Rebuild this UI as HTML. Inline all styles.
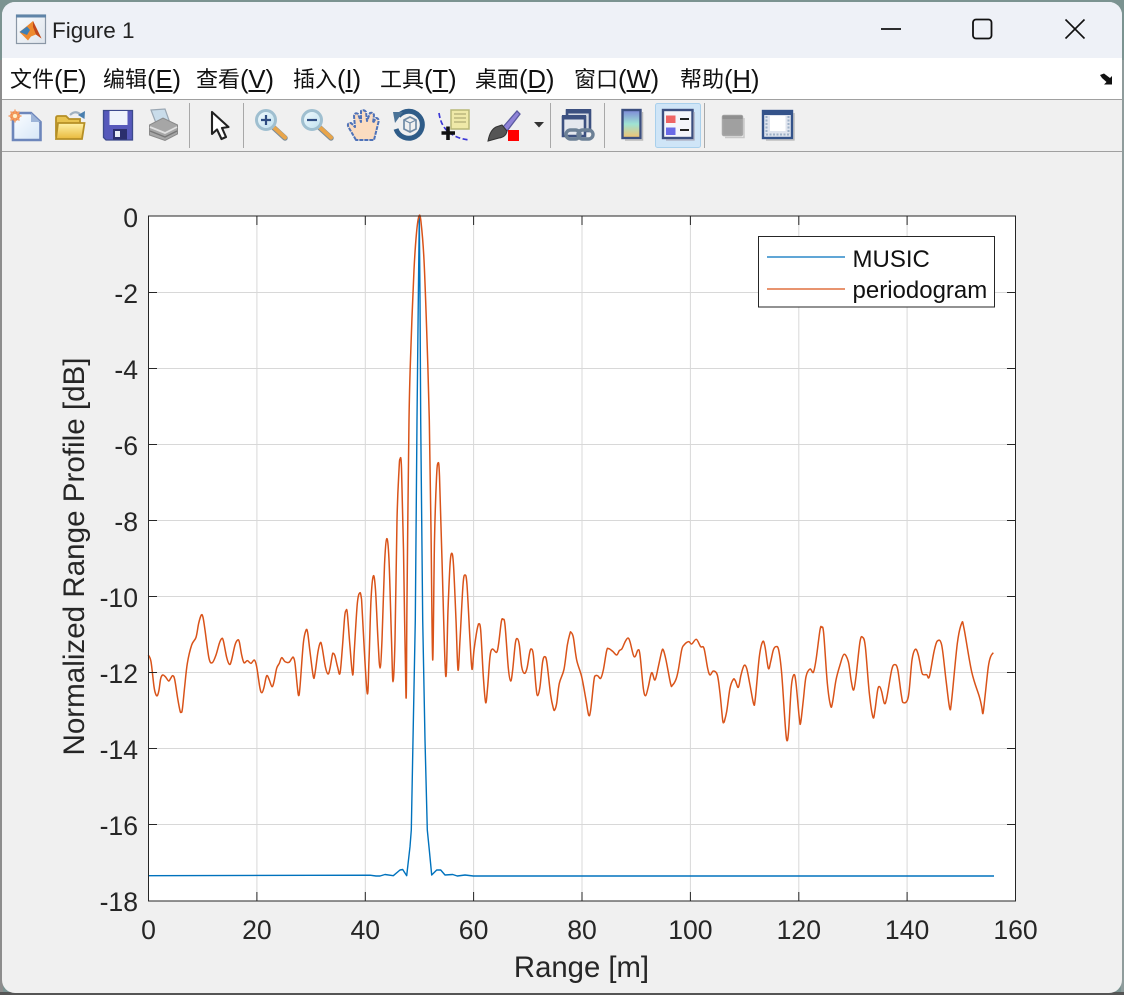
<!DOCTYPE html>
<html><head><meta charset="utf-8">
<style>
html,body{margin:0;padding:0;width:1124px;height:995px;overflow:hidden;background:#7b9391}
#edgeL{position:absolute;left:0;top:60px;width:3px;height:935px;background:#8d8d8d}
#edgeB{position:absolute;left:0;top:992px;width:1124px;height:3px;background:#555}
#edgeR{position:absolute;left:1121px;top:60px;width:3px;height:935px;background:#8f9c9c}
#win{position:absolute;left:2px;top:2px;width:1120px;height:991px;border-radius:13px;overflow:hidden;background:#f0f0f0}
#tb{position:absolute;left:0;top:0;width:1120px;height:56px;background:#eef1f7}
#mb{position:absolute;left:0;top:56px;width:1120px;height:41px;background:#fff;border-bottom:1px solid #a0a0a0}
#tl{position:absolute;left:0;top:98px;width:1120px;height:51px;background:#f0f0f0;border-bottom:1px solid #a0a0a0}
.m{position:absolute;top:61px;font:22px/34px "Liberation Sans","Noto Sans CJK SC",sans-serif;color:#111;white-space:nowrap;filter:blur(.3px)}
.m span{font-size:25.5px;font-weight:400;vertical-align:-1px}
.m u{text-underline-offset:2px}
#title{position:absolute;left:50px;top:15px;font:22.5px/28px "Liberation Sans",sans-serif;color:#222;filter:blur(.3px)}
svg{position:absolute;left:0;top:0;filter:blur(.35px)}
</style></head><body>
<div id="edgeL"></div><div id="edgeR"></div><div id="edgeB"></div>
<div id="win">
<div id="tb"></div><div id="mb"></div><div id="tl"></div>
<div id="title">Figure 1</div>
<div class="m" style="left:8px">文件<span>(<u>F</u>)</span></div>
<div class="m" style="left:101px">编辑<span>(<u>E</u>)</span></div>
<div class="m" style="left:194px">查看<span>(<u>V</u>)</span></div>
<div class="m" style="left:291px">插入<span>(<u>I</u>)</span></div>
<div class="m" style="left:378px">工具<span>(<u>T</u>)</span></div>
<div class="m" style="left:473px">桌面<span>(<u>D</u>)</span></div>
<div class="m" style="left:572px">窗口<span>(<u>W</u>)</span></div>
<div class="m" style="left:678px">帮助<span>(<u>H</u>)</span></div>
</div>
<svg width="1124" height="995" viewBox="0 0 1124 995" xmlns="http://www.w3.org/2000/svg" font-family="'Liberation Sans',sans-serif">
<defs>
<linearGradient id="pg" x1="0" y1="0" x2="1" y2="1"><stop offset="0" stop-color="#fbfdff"/><stop offset="1" stop-color="#d6e6f7"/></linearGradient>
<linearGradient id="fo" x1="0" y1="0" x2="0" y2="1"><stop offset="0" stop-color="#fff2a8"/><stop offset="1" stop-color="#e9b93c"/></linearGradient>
<linearGradient id="cb" x1="0" y1="0" x2="0" y2="1"><stop offset="0" stop-color="#7d88d8"/><stop offset=".5" stop-color="#9fe3d4"/><stop offset="1" stop-color="#f4c26e"/></linearGradient>
<linearGradient id="mw" x1="0" y1="0" x2="1" y2="1"><stop offset="0" stop-color="#f7fafd"/><stop offset="1" stop-color="#dfe5ec"/></linearGradient>
<linearGradient id="gl" x1="0" y1="0" x2="1" y2="1"><stop offset="0" stop-color="#f2fbff"/><stop offset="1" stop-color="#bfe0ee"/></linearGradient>
</defs>

<!-- window controls -->
<path d="M881 29H901" stroke="#111" stroke-width="1.800"/>
<rect x="973" y="19.500" width="18.500" height="19" rx="3" fill="none" stroke="#111" stroke-width="1.800"/>
<path d="M1065.500 19.500L1084.500 38.500M1084.500 19.500L1065.500 38.500" stroke="#111" stroke-width="1.600"/>

<!-- matlab logo -->
<rect x="16.500" y="15" width="29" height="28.500" fill="url(#mw)" stroke="#8a97a6" stroke-width="1.200"/>
<rect x="16" y="14.500" width="30" height="3" fill="#5f84a8"/>
<path d="M19.500 32L27 26L33 21L41.500 38.500L36 34.500L31 36.500L28 40.500Z" fill="#ee8a2e"/>
<path d="M19.500 32L27 26.500L30 30L27 35Z" fill="#3f7fb5"/>
<path d="M33 21L41.500 38.500L36 34.500L33 27Z" fill="#c0471c"/>

<!-- chevron in menu bar -->
<path d="M1100 75L1104 73.500L1110 78L1112 76V84.500H1104L1106.500 82L1102 78Z" fill="#111"/>

<!-- separators -->
<path d="M189.500 103V148M243.500 103V148M550.500 103V148M604.500 103V148M704.500 103V148" stroke="#a8a8a8" stroke-width="1"/>

<!-- new -->
<path d="M13 113H31L40.500 122V140H13Z" fill="url(#pg)" stroke="#6d86bb" stroke-width="2.600"/>
<path d="M31 113V122H40.500Z" fill="#9db4d8"/>
<circle cx="15" cy="116" r="5" fill="#f18a45"/>
<path d="M15 109.500V122.500M8.500 116H21.500M10.500 111.500L19.500 120.500M19.500 111.500L10.500 120.500" stroke="#f3a06a" stroke-width="1.500"/>
<circle cx="15" cy="116" r="2" fill="#fff2c9"/>
<!-- open -->
<path d="M56 118Q56 116 58 116H66L69 119H80V138H58Q56 138 56 136Z" fill="#e8c34f" stroke="#b58f26" stroke-width="1.800"/>
<path d="M56 139L58 123H84.500L82 139Z" fill="url(#fo)" stroke="#b58f26" stroke-width="1.800"/>
<path d="M70 115Q75 110 80 114" fill="none" stroke="#9fb0c0" stroke-width="2.200"/>
<path d="M85 111L84.500 119L78 115Z" fill="#4a7fae"/>
<!-- save -->
<path d="M103.500 110.500H132.500V140H106L103.500 137.500Z" fill="#5659bb" stroke="#3c4a8c" stroke-width="1.300"/>
<rect x="109.500" y="111" width="18" height="14" fill="#eef3fb"/>
<rect x="113" y="129" width="14" height="10.500" fill="#2b2f6e"/>
<rect x="115" y="131" width="5" height="6" fill="#e8ecf5"/>
<!-- print -->
<path d="M151 110L165 109L170 123H156Z" fill="#c9dcea" stroke="#9aa7b3" stroke-width="1.200"/>
<path d="M149.500 125L163 118L177.500 125V134L165 140.500L149.500 135Z" fill="#a6a6a6" stroke="#8a8a8a" stroke-width="1"/>
<path d="M150 127L165 133L177 127" fill="none" stroke="#e0e0e0" stroke-width="1.800"/>
<path d="M150 131L165 137L177 131" fill="none" stroke="#777" stroke-width="1.400"/>
<!-- cursor -->
<path d="M212 112V134L217 129.500L221.500 139L226 137L222 128L228.500 127Z" fill="#fff" stroke="#222" stroke-width="2.100" stroke-linejoin="round"/>

<!-- zoom in -->
<path d="M273.500 127.500L285 138" stroke="#7c8d99" stroke-width="5.500" stroke-linecap="round"/>
<path d="M274 127.500L285 137.500" stroke="#e9a54a" stroke-width="4" stroke-linecap="round"/>
<circle cx="266" cy="120" r="9.500" fill="url(#gl)" stroke="#9fbfd0" stroke-width="3"/>
<path d="M261 120H271M266 115V125" stroke="#2f4d82" stroke-width="2.200"/>
<!-- zoom out -->
<path d="M319.500 127.500L331 138" stroke="#7c8d99" stroke-width="5.500" stroke-linecap="round"/>
<path d="M320 127.500L331 137.500" stroke="#e9a54a" stroke-width="4" stroke-linecap="round"/>
<circle cx="312" cy="120" r="9.500" fill="url(#gl)" stroke="#9fbfd0" stroke-width="3"/>
<path d="M307 120H317" stroke="#2f4d82" stroke-width="2.200"/>
<!-- hand -->
<path d="M356 140L349 128Q346 123 351 123L355 127L354 116Q355 112 358 114L361 122L361 111Q364 109 366 112L367 121L370 113Q373 112 374 115L373 123L376 118Q379 118 378.500 122L376 132L374 140Z" fill="#fbdcc0" stroke="#4f72b8" stroke-width="2" stroke-dasharray="4 1" stroke-linejoin="round"/>
<!-- rotate -->
<path d="M398.500 116A13.500 13.500 0 1 1 396 129" fill="none" stroke="#2f5c88" stroke-width="5"/>
<path d="M393 112L403 112L395 123Z" fill="#4b7397"/>
<path d="M404 120L410 117L416 120V129L410 132L404 129Z" fill="none" stroke="#6f8aa5" stroke-width="1.700"/>
<path d="M404 120L410 123L416 120M410 123V132" fill="none" stroke="#6f8aa5" stroke-width="1.200"/>
<!-- data cursor -->
<rect x="451" y="110" width="18" height="19" fill="#efe9a8" stroke="#b8b777" stroke-width="1.500"/>
<path d="M454 114H466M454 118H466M454 122H466" stroke="#b0ad74" stroke-width="1.300"/>
<path d="M439 113Q441 127 450 133Q458 139 470 140" fill="none" stroke="#3b36d6" stroke-width="1.700" stroke-dasharray="5 2.500"/>
<path d="M441.500 133H455M448 126.500V140" stroke="#111" stroke-width="3.600"/>
<!-- brush -->
<path d="M503 127L517 111L520 114L507 131Z" fill="#8f83d8" stroke="#5b5aa0" stroke-width="1.300"/>
<path d="M502 125L507 131Q506 137 499 138L488 141Q490 130 496 127Z" fill="#555" stroke="#333" stroke-width="1"/>
<rect x="508" y="130" width="11" height="11" fill="#f00"/>
<path d="M534 122H544L539 127.500Z" fill="#333"/>

<!-- link -->
<path d="M567 110.500H590V131H567Z" fill="#d5d9e2" stroke="#3c5080" stroke-width="2.600"/>
<rect x="566" y="109" width="25" height="4.500" fill="#3c5080"/>
<path d="M563 117H585V136H563Z" fill="#e4e7ee" stroke="#3c5080" stroke-width="2.600"/>
<rect x="562" y="115" width="24" height="4.500" fill="#3c5080"/>
<rect x="566" y="130" width="14" height="9" rx="4.500" fill="none" stroke="#6c8096" stroke-width="3.400"/>
<rect x="578" y="130" width="15" height="9" rx="4.500" fill="none" stroke="#6c8096" stroke-width="3.400"/>
<!-- colorbar -->
<rect x="622.500" y="110" width="18" height="28" fill="url(#cb)" stroke="#3c4f80" stroke-width="2.400"/>
<path d="M642.500 112V140H625" fill="none" stroke="#bbb" stroke-width="1.500"/>
<!-- legend toggled -->
<rect x="655.500" y="103.500" width="45" height="44" rx="2" fill="#cfe5f7" stroke="#a9d0ec"/>
<rect x="663" y="110" width="29.500" height="28" fill="#f4f5fa" stroke="#3c4f80" stroke-width="2.400"/>
<rect x="666" y="115.500" width="9.500" height="7.500" fill="#ee6464"/>
<rect x="666" y="127.500" width="9.500" height="7.500" fill="#6a6ae6"/>
<path d="M680 119H689M680 130H689" stroke="#222" stroke-width="2"/>
<path d="M694 112V140H666" fill="none" stroke="#aab" stroke-width="1.300"/>
<!-- gray -->
<rect x="722.500" y="115.500" width="20" height="20" rx="1.500" fill="#a0a0a0" stroke="#a8a8a8" stroke-width="1.500"/>
<rect x="722.500" y="115.500" width="20" height="3.500" fill="#8f8f8f"/>
<path d="M744 118V137.500H725" fill="none" stroke="#c8c8c8" stroke-width="1.500"/>
<!-- plot tools -->
<rect x="763" y="111" width="29" height="27" fill="#dfe4ee" stroke="#34538a" stroke-width="2.400"/>
<rect x="763" y="110.500" width="29" height="4.500" fill="#34538a"/>
<rect x="770" y="116" width="15.500" height="15" fill="#fff"/>
<path d="M766.500 116V134M788.500 116V134M766 134.500H789" stroke="#9db0c7" stroke-width="2" stroke-dasharray="2 1.500"/>
<path d="M794 113V140H766" fill="none" stroke="#b5b5b5" stroke-width="1.300"/>

<!-- axes -->
<rect x="148.500" y="216" width="867" height="685" fill="#fff"/>
<path stroke="#d8d8d8" stroke-width="1" d="M256.900 216V901M365.300 216V901M473.600 216V901M582 216V901M690.400 216V901M798.800 216V901M907.100 216V901M148.500 292.500H1015.500M148.500 368.500H1015.500M148.500 444.500H1015.500M148.500 520.500H1015.500M148.500 596.500H1015.500M148.500 672.500H1015.500M148.500 748.500H1015.500M148.500 824.500H1015.500"/>
<g fill="none" stroke-linejoin="round">
<polyline stroke="#0072bd" stroke-width="1.400" points="148.500,875.700 370,875.200 376,876 380,876 385,874.500 393.300,875.700 400,870 402.700,869.500 406.700,875.700 410,846.700 411.300,830 413,740 415.300,620 417,420 418.300,300 419.300,216 420,300 420.700,420 422.700,620 425,740 427.300,830 429.300,850 431.700,875 436.700,870 440.700,870 445,875 452.700,874.500 457.300,876 465,875 473.300,876 490,876 994,876"/>
<g stroke="#d95319" stroke-width="1.500">
<g transform="translate(140 580) scale(.33333)">
<polyline class="sm" vector-effect="non-scaling-stroke" points="25,225 33,245 42,320 47,342 52,347 57,330 62,296 68,285 76,290 86,303 92,295 98,287 104,298 113,355 120,392 123,397 127,388 134,320 142,250 155,195 168,172 176,130 184,105 189,112 195,150 207,235 217,248 228,225 238,190 245,176 250,182 260,232 268,253 274,243 285,195 293,180 298,186 305,225 312,248 322,242 333,250 343,240 350,260 360,325 366,338 372,322 378,293 382,287 388,300 396,320 402,305 410,265 418,250 425,233 435,245 447,247 455,236 460,232 465,250 472,320 476,347 480,320 490,190 498,151 503,158 510,215 520,290 525,280 534,215 541,188 546,200 556,260 564,282 570,265 577,225 580,220 585,228 593,262 600,280 607,205 614,110 618,92 622,100 630,200 638,285 643,210 652,70 660,38 665,60"/>
</g>
<polyline class="sm" points="361.600,600 367,691.700 369,660 371,600 373.300,576 375.500,590 378,640 380,668 382,640 384.500,565 386.700,538.700 389,560 391.500,640 393,681.700 395,640 397,520 399,470 400,459 401.500,468 403.500,550 406,697.300 407,600 409,420 411,345 414,270 416.500,233 419,216 421,222 424,260 427,340 429.300,420 431,530 432.700,660 434.500,540 436.500,478 438,463 439.500,476 442,560 445.700,675.700 448,610 450,565 451.700,553.300 453.500,565 456,620 458,670 460,640 463,585 465,575 467,585 470,640 472,669.300 474,650 477,630 478.700,623.300"/>
<g transform="translate(430 580) scale(.33333)">
<polyline class="sm" vector-effect="non-scaling-stroke" points="146,130 152,150 160,290 167,368 173,320 180,230 187,207 200,217 206,190 214,125 219,118 225,135 235,265 242,303 248,270 256,190 262,176 268,195 275,260 283,280 291,265 299,218 304,207 310,225 318,320 323,347 330,320 338,245 345,230 351,250 362,345 370,385 374,390 380,370 388,310 402,268 412,195 420,160 423,157 430,172 440,240 455,290 468,360 476,405 482,390 492,300 497,287 504,288 512,295 520,270 530,212 536,206 548,214 560,225 568,212 576,206 586,184 594,174 600,185 610,225 616,229 624,210 630,225 640,325 647,347 655,320 665,278 675,300 685,260 695,215 700,210 708,240 722,312 727,316 738,298 745,270 755,210 762,195 776,185 785,192 799,178 812,200 822,205 833,265 840,285 850,273 862,285 870,340 878,420 882,428"/>
</g>
<g transform="translate(720 600) scale(.33333)">
<polyline class="sm" vector-effect="non-scaling-stroke" points="12,368 20,335 30,265 40,238 46,242 55,262 63,225 72,197 80,205 90,255 101,312 106,295 118,170 128,125 135,140 145,205 152,185 160,150 168,140 176,150 185,220 196,380 201,422 206,390 214,260 222,224 228,250 238,355 242,368 250,300 258,230 270,207 280,217 288,180 300,90 305,82 311,100 322,250 332,318 338,305 348,240 360,195 372,163 385,185 394,245 401,270 408,230 420,125 428,112 436,140 448,280 459,352 465,330 473,270 479,260 485,275 493,310 500,295 515,210 524,194 533,208 544,285 550,308 565,290 576,180 586,148 595,165 605,215 610,224 620,224 628,230 642,155 652,123 665,135 678,240 689,324 695,300 712,130 725,70 732,85 755,215 778,290 785,320 789,340 795,290 805,200 812,170 820,158"/>
</g>
</g>
</g>
<!-- ticks -->
<g stroke="#262626" stroke-width="1">
<path d="M148.500 216V901H1015.500V216H148.500Z" fill="none"/>
<path d="M256.900 901V892M365.300 901V892M473.600 901V892M582 901V892M690.400 901V892M798.800 901V892M907.100 901V892"/>
<path d="M256.900 216V225M365.300 216V225M473.600 216V225M582 216V225M690.400 216V225M798.800 216V225M907.100 216V225"/>
<path d="M148.500 292.500H157M148.500 368.500H157M148.500 444.500H157M148.500 520.500H157M148.500 596.500H157M148.500 672.500H157M148.500 748.500H157M148.500 824.500H157"/>
<path d="M1015.500 292.500H1007M1015.500 368.500H1007M1015.500 444.500H1007M1015.500 520.500H1007M1015.500 596.500H1007M1015.500 672.500H1007M1015.500 748.500H1007M1015.500 824.500H1007"/>
</g>
<!-- tick labels -->
<g font-size="26.600" fill="#262626" text-anchor="end">
<text x="138" y="227">0</text><text x="138" y="303">-2</text><text x="138" y="379">-4</text><text x="138" y="455">-6</text><text x="138" y="531">-8</text><text x="138" y="607">-10</text><text x="138" y="683">-12</text><text x="138" y="759">-14</text><text x="138" y="835">-16</text><text x="138" y="911">-18</text>
</g>
<g font-size="26.600" fill="#262626" text-anchor="middle">
<text x="148.500" y="939">0</text><text x="256.900" y="939">20</text><text x="365.300" y="939">40</text><text x="473.600" y="939">60</text><text x="582" y="939">80</text><text x="690.400" y="939">100</text><text x="798.800" y="939">120</text><text x="907.100" y="939">140</text><text x="1015.500" y="939">160</text>
</g>
<text x="581.500" y="977" font-size="29.300" fill="#262626" text-anchor="middle">Range [m]</text>
<text transform="translate(84 556.500) rotate(-90)" font-size="29.600" fill="#262626" text-anchor="middle">Normalized Range Profile [dB]</text>
<!-- legend -->
<rect x="758.500" y="236.500" width="236" height="70.500" fill="#fff" stroke="#262626" stroke-width="1"/>
<path d="M767 257H845" stroke="#0072bd" stroke-width="1.300"/>
<path d="M767 289H845" stroke="#d95319" stroke-width="1.300"/>
<text x="852.500" y="267" font-size="24" fill="#111">MUSIC</text>
<text x="852.500" y="298" font-size="24" fill="#111">periodogram</text>
</svg>
<script>
document.querySelectorAll('polyline.sm').forEach(function(l){
  var p=[],s=l.points;
  for(var i=0;i<s.numberOfItems;i++){p.push(s.getItem(i));}
  var d='M'+p[0].x+' '+p[0].y;
  for(i=0;i<p.length-1;i++){
    var a=p[Math.max(i-1,0)],b=p[i],c=p[i+1],e=p[Math.min(i+2,p.length-1)];
    var k=1/6;
    d+='C'+(b.x+(c.x-a.x)*k).toFixed(2)+' '+(b.y+(c.y-a.y)*k).toFixed(2)+' '+(c.x-(e.x-b.x)*k).toFixed(2)+' '+(c.y-(e.y-b.y)*k).toFixed(2)+' '+c.x+' '+c.y;
  }
  var n=document.createElementNS('http://www.w3.org/2000/svg','path');
  n.setAttribute('d',d);
  if(l.getAttribute('vector-effect')){n.setAttribute('vector-effect','non-scaling-stroke');}
  l.parentNode.replaceChild(n,l);
});
</script>
</body></html>
